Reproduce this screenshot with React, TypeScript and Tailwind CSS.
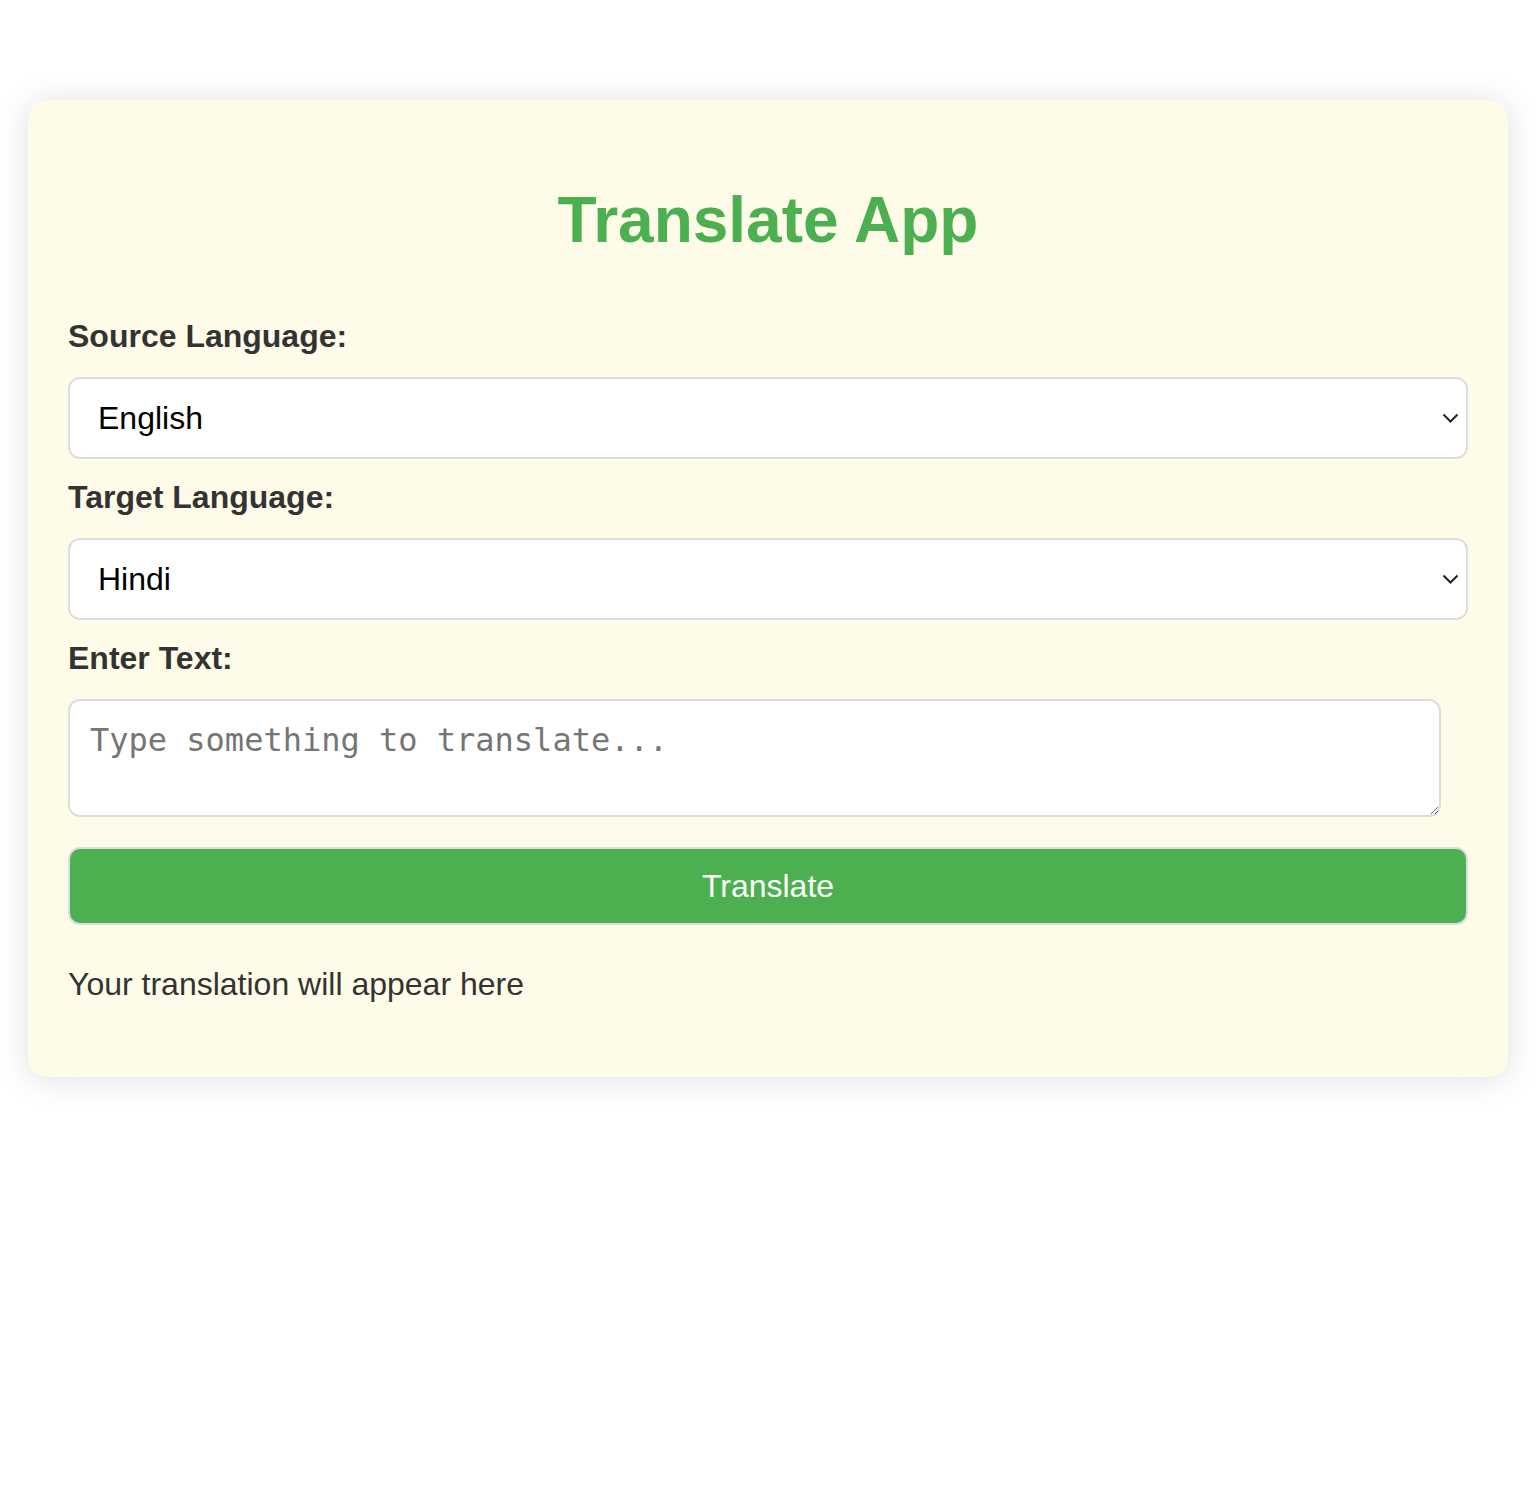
import { useState } from 'react';

const languages = [
  { code: 'en', name: 'English' },
  { code: 'hi', name: 'Hindi' },
  { code: 'es', name: 'Spanish' },
  { code: 'fr', name: 'French' },
  { code: 'de', name: 'German' },
];

const Chevron = () => (
  <svg
    className="pointer-events-none absolute right-[9px] top-1/2 -translate-y-1/2"
    width="17"
    height="10"
    viewBox="0 0 17 10"
    fill="none"
  >
    <path d="M1.5 1.5 L8.5 8.5 L15.5 1.5" stroke="#222" strokeWidth="2" />
  </svg>
);

const LanguageSelect = ({
  value,
  onChange,
}: {
  value: string;
  onChange: (v: string) => void;
}) => (
  <div className="relative">
    <select
      value={value}
      onChange={(e) => onChange(e.target.value)}
      className="block h-[82px] w-full appearance-none rounded-[12px] border-2 border-[#dddddd] bg-white pl-[28px] pr-[40px] text-[32px] text-black outline-none"
    >
      {languages.map((lang) => (
        <option key={lang.code} value={lang.code}>
          {lang.name}
        </option>
      ))}
    </select>
    <Chevron />
  </div>
);

const App = () => {
  const [source, setSource] = useState('en');
  const [target, setTarget] = useState('hi');
  const [text, setText] = useState('');

  return (
    <div
      className="min-h-screen bg-white px-[28px] pt-[100px] leading-[normal]"
      style={{ fontFamily: "'Liberation Sans', Arial, sans-serif" }}
    >
      <div className="rounded-[20px] bg-[#fefce8] p-[40px] shadow-[0_2px_32px_rgba(0,0,0,0.13)]">
        <h1 className="mb-[61px] mt-[43px] text-center text-[64px] font-bold text-[#4caf50]">
          Translate App
        </h1>

        {/* Source */}
        <label className="mb-[22px] block text-[32px] font-bold text-[#333333]">
          Source Language:
        </label>
        <div className="mb-[20px]">
          <LanguageSelect value={source} onChange={setSource} />
        </div>

        {/* Target */}
        <label className="mb-[22px] block text-[32px] font-bold text-[#333333]">
          Target Language:
        </label>
        <div className="mb-[20px]">
          <LanguageSelect value={target} onChange={setTarget} />
        </div>

        {/* Text */}
        <label className="mb-[22px] block text-[32px] font-bold text-[#333333]">
          Enter Text:
        </label>
        <textarea
          value={text}
          onChange={(e) => setText(e.target.value)}
          placeholder="Type something to translate..."
          className="block h-[118px] w-[1373px] rounded-[12px] border-2 border-[#dddddd] bg-white px-[20px] pt-[20px] text-[32px] text-black outline-none placeholder:text-[#757575]"
          style={{ fontFamily: "'DejaVu Sans Mono', monospace" }}
        />

        <button className="mt-[30px] block h-[78px] w-full rounded-[12px] border-2 border-[#dddddd] bg-[#4caf50] text-[32px] text-white">
          Translate
        </button>

        <p className="mb-[34px] mt-[41px] text-[32px] text-[#333333]">Your translation will appear here</p>
      </div>
    </div>
  );
};

export default App;
